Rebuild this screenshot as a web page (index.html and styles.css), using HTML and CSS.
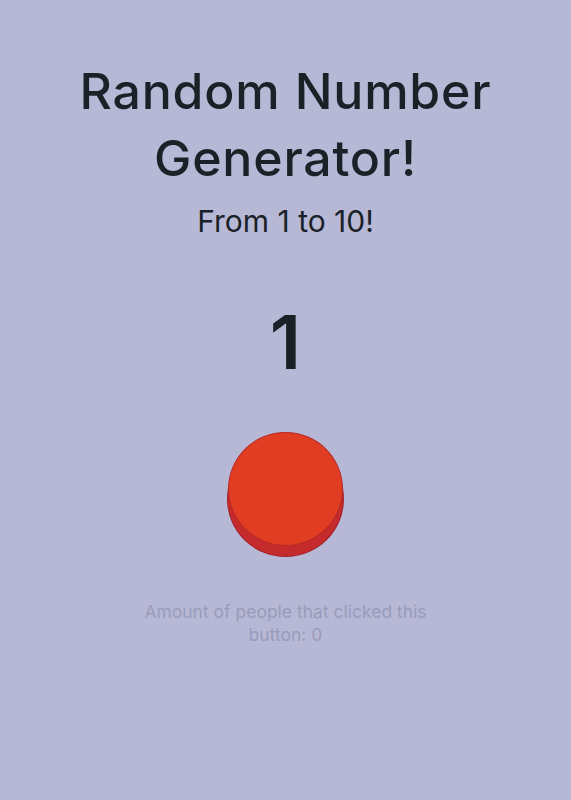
FILE: index.html
```html
<!DOCTYPE html>
<html lang="en">
<head>
    <meta charset="UTF-8">
    <meta name="viewport" content="width=device-width, initial-scale=1.0">
    <title>Random Number Generator</title>
    <link rel="stylesheet" href="styles.css">
</head>
<body>
    <div class="container">
        <h1>Random Number Generator!</h1>
        <h2>From 1 to 10!</h2>
        <div class="number" id="number">1</div>
        <button class="big-btn" id="btn" onclick="generate()"></button>
        <p class="counter" id="counter">Amount of people that clicked this button: 0</p>
    </div>
    <script>
        let clicks = 0;
        function generate() {
            document.getElementById("number").textContent = Math.floor(Math.random() * 10) + 1;
            clicks++;
            document.getElementById("counter").textContent = "Amount of people that clicked this button: " + clicks;
        }
    </script>
</body>
</html>
```

FILE: styles.css
```css
body {
    margin: 0;
    font-family: Inter, "Noto Sans", sans-serif;
    background: #b6b8d6;
    color: #1a2228;
    min-height: 100vh;
}
.container {
    display: flex;
    flex-direction: column;
    align-items: center;
    text-align: center;
    padding-top: 58px;
}
h1 {
    font-size: 50px;
    font-weight: 500;
    letter-spacing: 0.8px;
    line-height: 67px;
    margin: 0;
    width: 460px;
}
h2 {
    font-size: 30px;
    font-weight: 400;
    margin: 11px 0 0;
}
.number {
    font-size: 74px;
    font-weight: 600;
    margin-top: 66px;
    line-height: 1;
}
.big-btn {
    margin-top: 53px;
    width: 115px;
    height: 114px;
    border-radius: 50%;
    border: 1px solid #b82a25;
    background: #e03d22;
    box-shadow: 0 10px 0 #c52a2c, 0 10px 0 1px #a0222a;
    cursor: pointer;
    padding: 0;
}
.big-btn:active {
    transform: translateY(8px);
    box-shadow: 0 2px 0 #c52a2c;
}
.counter {
    margin-top: 54px;
    width: 300px;
    font-size: 17.5px;
    line-height: 23px;
    color: #9a9cbb;
}
```
